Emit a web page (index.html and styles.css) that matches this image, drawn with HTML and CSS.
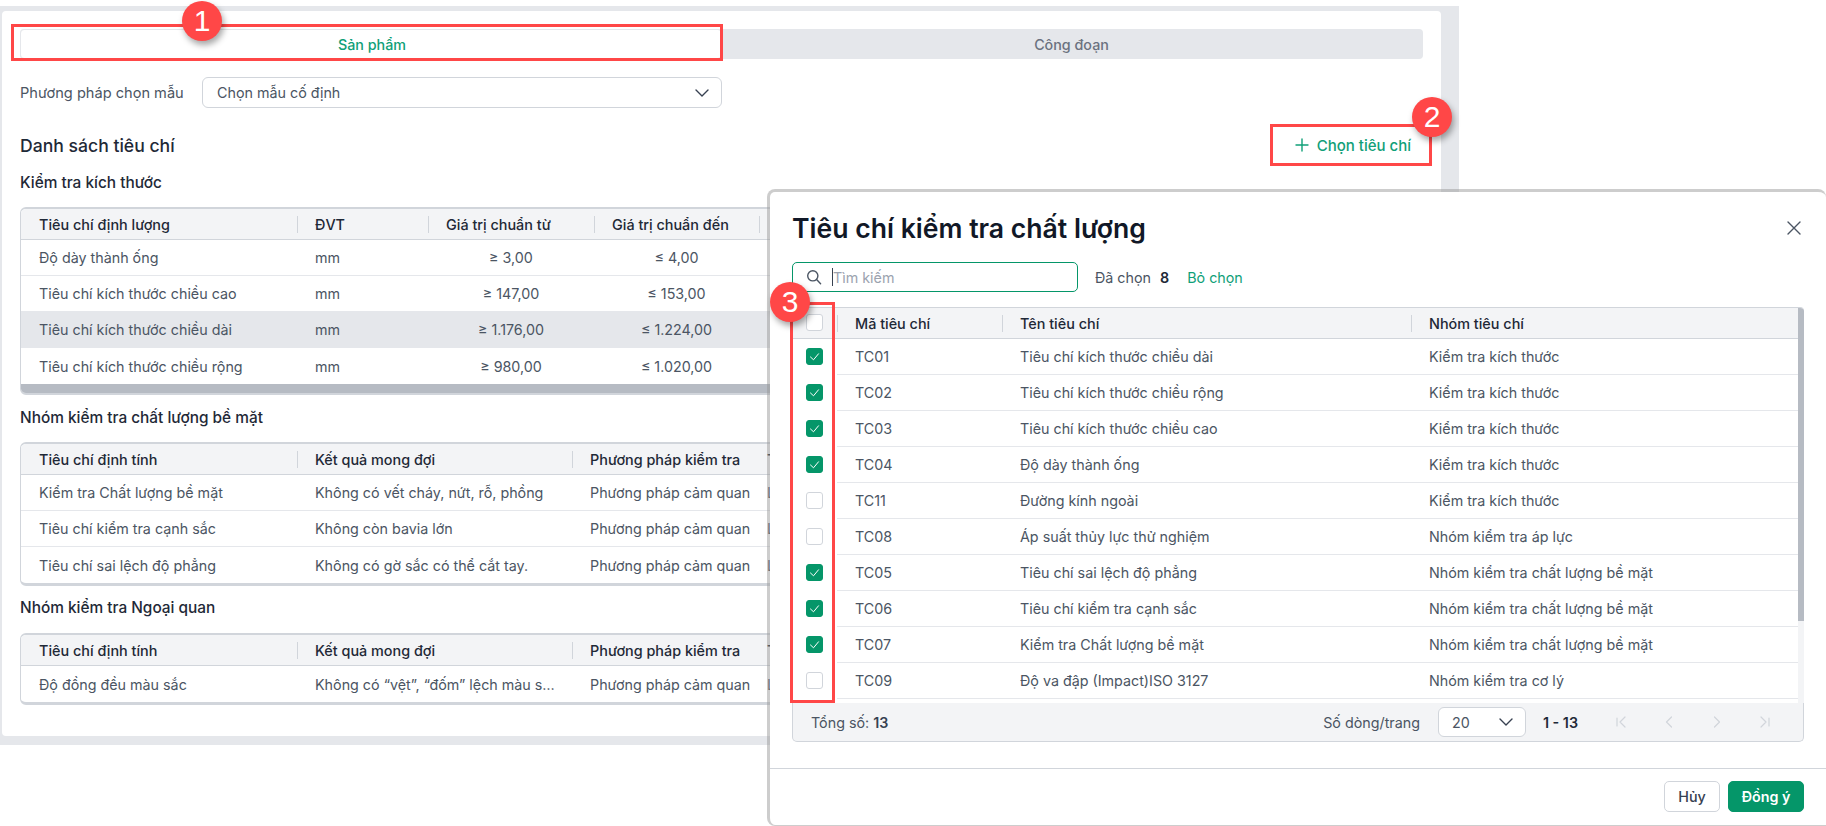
FILE: index.html
```html
<!DOCTYPE html>
<html lang="vi">
<head>
<meta charset="utf-8">
<title>Tiêu chí kiểm tra chất lượng</title>
<link rel="stylesheet" href="styles.css">
</head>
<body>
<svg class="defs" width="0" height="0" aria-hidden="true">
  <symbol id="chev" viewBox="0 0 16 16"><path d="M2 5l6 6 6-6" fill="none" stroke="currentColor" stroke-width="1.4" stroke-linecap="round" stroke-linejoin="round"/></symbol>
  <symbol id="tick" viewBox="0 0 17 17"><path d="M4.5 9l3 2.8 5-6" fill="none" stroke="#fff" stroke-width="1" stroke-linecap="round" stroke-linejoin="round"/></symbol>
</svg>
<main class="frame">
  <div class="card">
    <div class="tabs">
      <div class="tab tab-active">Sản phẩm</div>
      <div class="tab">Công đoạn</div>
    </div>
    <div class="method">
      <span class="method-label">Phương pháp chọn mẫu</span>
      <div class="select method-select">
        <span>Chọn mẫu cố định</span>
        <svg class="chev"><use href="#chev"/></svg>
      </div>
    </div>
    <div class="list-head">
      <h2 class="list-title">Danh sách tiêu chí</h2>
      <div class="add-btn">
        <svg class="plus" viewBox="0 0 14 14"><path d="M7 1v12M1 7h12" fill="none" stroke="currentColor" stroke-width="1.4" stroke-linecap="round"/></svg>
        <span>Chọn tiêu chí</span>
      </div>
    </div>

    <h3 class="group first">Kiểm tra kích thước</h3>
    <div class="tbl-wrap">
      <table class="tbl">
        <thead><tr><th class="c-a">Tiêu chí định lượng</th><th class="c-unit">ĐVT</th><th class="c-from">Giá trị chuẩn từ</th><th class="c-to">Giá trị chuẩn đến</th><th class="c-rest"></th></tr></thead>
        <tbody>
          <tr><td>Độ dày thành ống</td><td>mm</td><td class="num">≥ 3,00</td><td class="num">≤ 4,00</td><td></td></tr>
          <tr><td>Tiêu chí kích thước chiều cao</td><td>mm</td><td class="num">≥ 147,00</td><td class="num">≤ 153,00</td><td></td></tr>
          <tr class="hl"><td>Tiêu chí kích thước chiều dài</td><td>mm</td><td class="num">≥ 1.176,00</td><td class="num">≤ 1.224,00</td><td></td></tr>
          <tr><td>Tiêu chí kích thước chiều rộng</td><td>mm</td><td class="num">≥ 980,00</td><td class="num">≤ 1.020,00</td><td></td></tr>
        </tbody>
      </table>
      <div class="hbar"></div>
    </div>

    <h3 class="group">Nhóm kiểm tra chất lượng bề mặt</h3>
    <div class="tbl-wrap thick">
      <table class="tbl tbl-quality">
        <thead><tr><th class="c-a">Tiêu chí định tính</th><th class="c-b">Kết quả mong đợi</th><th class="c-c">Phương pháp kiểm tra</th><th class="c-rest nodiv">Tần suất</th></tr></thead>
        <tbody>
          <tr><td>Kiểm tra Chất lượng bề mặt</td><td>Không có vết cháy, nứt, rỗ, phồng</td><td>Phương pháp cảm quan</td><td>Lần/ca</td></tr>
          <tr><td>Tiêu chí kiểm tra cạnh sắc</td><td>Không còn bavia lớn</td><td>Phương pháp cảm quan</td><td>Lần/ca</td></tr>
          <tr><td>Tiêu chí sai lệch độ phẳng</td><td>Không có gờ sắc có thể cắt tay.</td><td>Phương pháp cảm quan</td><td>Lần/ca</td></tr>
        </tbody>
      </table>
    </div>

    <h3 class="group third">Nhóm kiểm tra Ngoại quan</h3>
    <div class="tbl-wrap thick">
      <table class="tbl tbl-quality">
        <thead><tr><th class="c-a">Tiêu chí định tính</th><th class="c-b">Kết quả mong đợi</th><th class="c-c">Phương pháp kiểm tra</th><th class="c-rest nodiv">Tần suất</th></tr></thead>
        <tbody>
          <tr><td>Độ đồng đều màu sắc</td><td>Không có “vệt”, “đốm” lệch màu sắc</td><td>Phương pháp cảm quan</td><td>Lần/ca</td></tr>
        </tbody>
      </table>
    </div>
  </div>
</main>

<section class="modal">
  <header class="modal-head">
    <h1 class="modal-title">Tiêu chí kiểm tra chất lượng</h1>
    <svg class="close" viewBox="0 0 14 14"><path d="M1 1l12 12M13 1L1 13" fill="none" stroke="#4b5563" stroke-width="1.4" stroke-linecap="round"/></svg>
  </header>
  <div class="modal-tools">
    <div class="search">
      <svg class="search-ico" viewBox="0 0 16 16"><circle cx="6.8" cy="6.8" r="5.1" fill="none" stroke="#4b5563" stroke-width="1.4"/><path d="M10.6 10.6l4 4.2" fill="none" stroke="#4b5563" stroke-width="1.4" stroke-linecap="round"/></svg>
      <span class="caret"></span>
      <span class="placeholder">Tìm kiếm</span>
    </div>
    <span class="picked">Đã chọn <b>8</b></span>
    <span class="unpick">Bỏ chọn</span>
  </div>
  <div class="dlg-table">
    <div class="dlg-scroll">
      <table class="tbl dlg">
        <thead><tr><th class="d-check"><span class="cb"></span></th><th class="d-code">Mã tiêu chí</th><th class="d-name">Tên tiêu chí</th><th class="d-group">Nhóm tiêu chí</th></tr></thead>
        <tbody>
          <tr><td class="d-check"><span class="cb on"><svg><use href="#tick"/></svg></span></td><td>TC01</td><td>Tiêu chí kích thước chiều dài</td><td>Kiểm tra kích thước</td></tr>
          <tr><td class="d-check"><span class="cb on"><svg><use href="#tick"/></svg></span></td><td>TC02</td><td>Tiêu chí kích thước chiều rộng</td><td>Kiểm tra kích thước</td></tr>
          <tr><td class="d-check"><span class="cb on"><svg><use href="#tick"/></svg></span></td><td>TC03</td><td>Tiêu chí kích thước chiều cao</td><td>Kiểm tra kích thước</td></tr>
          <tr><td class="d-check"><span class="cb on"><svg><use href="#tick"/></svg></span></td><td>TC04</td><td>Độ dày thành ống</td><td>Kiểm tra kích thước</td></tr>
          <tr><td class="d-check"><span class="cb"></span></td><td>TC11</td><td>Đường kính ngoài</td><td>Kiểm tra kích thước</td></tr>
          <tr><td class="d-check"><span class="cb"></span></td><td>TC08</td><td>Áp suất thủy lực thử nghiệm</td><td>Nhóm kiểm tra áp lực</td></tr>
          <tr><td class="d-check"><span class="cb on"><svg><use href="#tick"/></svg></span></td><td>TC05</td><td>Tiêu chí sai lệch độ phẳng</td><td>Nhóm kiểm tra chất lượng bề mặt</td></tr>
          <tr><td class="d-check"><span class="cb on"><svg><use href="#tick"/></svg></span></td><td>TC06</td><td>Tiêu chí kiểm tra cạnh sắc</td><td>Nhóm kiểm tra chất lượng bề mặt</td></tr>
          <tr><td class="d-check"><span class="cb on"><svg><use href="#tick"/></svg></span></td><td>TC07</td><td>Kiểm tra Chất lượng bề mặt</td><td>Nhóm kiểm tra chất lượng bề mặt</td></tr>
          <tr><td class="d-check"><span class="cb"></span></td><td>TC09</td><td>Độ va đập (Impact)ISO 3127</td><td>Nhóm kiểm tra cơ lý</td></tr>
        </tbody>
      </table>
    </div>
    <div class="vbar"><div class="vthumb"></div></div>
  </div>
  <div class="pager">
    <span class="total">Tổng số: <b>13</b></span>
    <span class="per-page">Số dòng/trang</span>
    <div class="select page-select"><span>20</span><svg class="chev"><use href="#chev"/></svg></div>
    <b class="range">1 - 13</b>
    <div class="nav">
      <svg viewBox="0 0 14 14"><path d="M3 3v8M11 2L6 7l5 5" fill="none" stroke="currentColor" stroke-width="1.2" stroke-linecap="round" stroke-linejoin="round"/></svg>
      <svg viewBox="0 0 14 14"><path d="M9.5 2L4.5 7l5 5" fill="none" stroke="currentColor" stroke-width="1.2" stroke-linecap="round" stroke-linejoin="round"/></svg>
      <svg viewBox="0 0 14 14"><path d="M4.5 2l5 5-5 5" fill="none" stroke="currentColor" stroke-width="1.2" stroke-linecap="round" stroke-linejoin="round"/></svg>
      <svg viewBox="0 0 14 14"><path d="M11 3v8M3 2l5 5-5 5" fill="none" stroke="currentColor" stroke-width="1.2" stroke-linecap="round" stroke-linejoin="round"/></svg>
    </div>
  </div>
  <footer class="modal-foot">
    <button class="btn">Hủy</button>
    <button class="btn btn-primary">Đồng ý</button>
  </footer>
</section>

<div class="mark mark-1"></div>
<div class="mark mark-2"></div>
<div class="mark mark-3"></div>
<div class="badge badge-1">1</div>
<div class="badge badge-2">2</div>
<div class="badge badge-3">3</div>
</body>
</html>
```
FILE: styles.css
```css
* { box-sizing: border-box; }
html, body { height: 100%; }
body {
  margin: 0;
  background: #fff;
  overflow: hidden;
  font-family: Inter, "Noto Sans", sans-serif;
  font-size: 14.3px;
  color: #4b5563;
}
.defs { position: absolute; }
h1, h2, h3 { margin: 0; }

.frame {
  width: 1459px;
  margin-top: 6px;
  padding: 5px 18px 9px 2px;
  background: #e5e7eb;
}
.card {
  background: #fff;
  border-radius: 4px;
  padding: 18px 18px 31px 18px;
}

.tabs {
  display: flex;
  height: 30px;
  background: #e5e7eb;
  border-radius: 4px;
}
.tab {
  flex: 1;
  display: flex;
  align-items: center;
  justify-content: center;
  padding-right: 2px;
  font-size: 14.3px;
  font-weight: 500;
  color: #6b7280;
}
.tab-active {
  flex: 0 0 702px;
  padding: 0 0 0 2px;
  background: #fff;
  border: 1px solid #e5e7eb;
  border-radius: 4px;
  color: #10a078;
}

.method {
  display: flex;
  align-items: center;
  margin-top: 18px;
}
.method-label { width: 182px; font-size: 14.6px; color: #4b5563; }
.select {
  display: flex;
  align-items: center;
  justify-content: space-between;
  background: #fff;
  border: 1px solid #d1d5db;
  border-radius: 6px;
}
.method-select {
  width: 520px;
  height: 31px;
  padding: 0 11px 0 14px;
  color: #4b5563;
}
.chev { width: 16px; height: 16px; color: #374151; }

.list-head {
  display: flex;
  align-items: center;
  justify-content: space-between;
  height: 24px;
  margin-top: 25px;
}
.list-title { font-size: 17.6px; font-weight: 500; color: #1f2937; }
.add-btn {
  display: flex;
  align-items: center;
  gap: 8px;
  margin-right: 12px;
  color: #10a078;
  font-weight: 500;
  font-size: 15px;
}
.plus { width: 14px; height: 14px; }

.group {
  font-size: 15.4px;
  font-weight: 500;
  line-height: 20px;
  color: #1f2937;
  margin-top: 13px;
}
.group.first { margin-top: 16px; }
.group.third { margin-top: 12px; }

.tbl-wrap {
  width: 1404px;
  margin-top: 14px;
  overflow: hidden;
  border: 1px solid #d1d5db;
  border-top-width: 2px;
  border-bottom-width: 2px;
  border-radius: 6px;
}
.tbl-wrap.thick { border-bottom-width: 3px; }
.group.third + .tbl-wrap { margin-top: 15px; }

.tbl {
  width: 100%;
  border-collapse: separate;
  border-spacing: 0;
  table-layout: fixed;
}
.tbl th {
  position: relative;
  height: 31px;
  padding: 0 18px;
  text-align: left;
  font-weight: 500;
  font-size: 14.4px;
  color: #1f2937;
  background: #f3f4f6;
  border-bottom: 1px solid #d1d5db;
  white-space: nowrap;
}
.tbl th + th::before {
  content: "";
  position: absolute;
  left: 0;
  top: 7px;
  width: 1px;
  height: 17px;
  background: #d1d5db;
}
.tbl th.nodiv::before { display: none; }
.tbl td {
  height: 36px;
  padding: 0 18px;
  border-bottom: 1px solid #e5e7eb;
  white-space: nowrap;
  overflow: hidden;
  text-overflow: ellipsis;
}
.tbl tbody tr:last-child td { border-bottom: 0; }
.tbl tr.hl td { background: #e5e7eb; border-bottom-color: #e5e7eb; }
.tbl td.num { text-align: center; }
.tbl-quality td:nth-child(2) { padding-right: 14px; }
.tbl-quality td:nth-child(3) { padding-right: 0; overflow: visible; }
.c-a { width: 276px; }
.c-unit { width: 131px; }
.c-from { width: 166px; }
.c-to { width: 165px; }
.c-b { width: 275px; }
.c-c { width: 177px; }
.hbar { height: 9px; background: #b6bbc3; }

/* Modal */
.modal {
  position: absolute;
  left: 767px;
  top: 189px;
  right: 0;
  bottom: 0;
  display: flex;
  flex-direction: column;
  background: #fff;
  background-clip: padding-box;
  border: 3px solid rgba(150, 150, 150, 0.47);
  border-right: 0;
  border-bottom-width: 1px;
  border-radius: 8px 8px 0 8px;
}
.modal-head {
  display: flex;
  align-items: center;
  justify-content: space-between;
  padding: 20px 25px 0 22px;
}
.modal-title {
  font-size: 26.6px;
  line-height: 32px;
  font-weight: 600;
  color: #111827;
}
.close { width: 14px; height: 14px; }
.modal-tools {
  display: flex;
  align-items: center;
  margin: 18px 22px 0;
}
.search {
  display: flex;
  align-items: center;
  width: 286px;
  height: 30px;
  padding-left: 13px;
  border: 1px solid #059669;
  border-radius: 5px;
}
.search-ico { width: 16px; height: 16px; }
.caret { width: 1px; height: 18px; margin-left: 10px; background: #374151; }
.placeholder { color: #9ca3af; }
.picked { margin-left: 17px; }
.picked b { margin-left: 5px; font-weight: 600; color: #1f2937; }
.unpick { margin-left: 18px; color: #10a078; }

.dlg-table {
  display: flex;
  height: 396px;
  margin: 15px 22px 0;
  border-left: 1px solid #d1d5db;
  border-top: 1px solid #d1d5db;
  border-top-right-radius: 4px;
  overflow: hidden;
}
.dlg-scroll { flex: 1; min-width: 0; }
.vbar { width: 6px; background: #f3f4f6; }
.vthumb { height: 313px; background: #b6bbc3; }
.dlg td { background: #fff; }
.dlg tbody tr:last-child td { border-bottom: 1px solid #e5e7eb; }
.dlg td.d-check, .dlg tbody tr:last-child td.d-check { border-bottom: 0; padding: 0 1px 0 0; }
.dlg th.d-check { padding: 0 1px 0 0; }
.d-check { width: 44px; }
.d-code { width: 165px; }
.d-name { width: 409px; }
.cb {
  display: block;
  width: 17px;
  height: 17px;
  margin: -2px auto 0;
  background: #fff;
  border: 1px solid #d1d5db;
  border-radius: 3px;
}
.cb.on { background: #059669; border-color: #059669; }
.cb svg { display: block; width: 17px; height: 17px; margin: -1px; }

.pager {
  display: flex;
  align-items: center;
  height: 39px;
  margin: 0 22px;
  padding-left: 18px;
  background: #f3f4f6;
  border: 1px solid #d1d5db;
  border-top: 0;
  border-radius: 0 0 5px 5px;
}
.total b { font-weight: 600; color: #374151; }
.per-page { margin-left: auto; }
.page-select {
  width: 88px;
  height: 30px;
  margin-left: 18px;
  padding: 0 11px 0 13px;
}
.range { margin-left: 17px; font-weight: 600; color: #1f2937; }
.nav {
  display: flex;
  gap: 34px;
  margin-left: 36px;
  margin-right: 31px;
  color: #d1d5db;
}
.nav svg { width: 14px; height: 14px; }

.modal-foot {
  display: flex;
  justify-content: flex-end;
  gap: 8px;
  flex: 1;
  margin-top: 26px;
  padding: 12px 22px 0;
  border-top: 1px solid #d1d5db;
}
.btn {
  height: 31px;
  width: 56px;
  padding: 0;
  background: #fff;
  border: 1px solid #d1d5db;
  border-radius: 5px;
  font: 500 14.3px Inter, "Noto Sans", sans-serif;
  color: #374151;
}
.btn-primary {
  width: 76px;
  background: #059669;
  border-color: #059669;
  color: #fff;
  font-weight: 600;
}

/* Annotations laid over the screenshot */
.mark {
  position: absolute;
  border: 3px solid #ff4747;
}
.mark-1 { left: 11px; top: 24px; width: 712px; height: 37px; }
.mark-2 { left: 1270px; top: 124px; width: 162px; height: 42px; }
.mark-3 { left: 790px; top: 302px; width: 45px; height: 401px; }
.badge {
  position: absolute;
  width: 40px;
  height: 40px;
  display: flex;
  align-items: center;
  justify-content: center;
  border-radius: 50%;
  background: #ff4747;
  box-shadow: 2px 4px 6px rgba(0, 0, 0, 0.35);
  color: #fff;
  font: 400 30px "Liberation Sans", Arial, sans-serif;
}
.badge-1 { left: 182px; top: 1px; }
.badge-2 { left: 1412px; top: 97px; }
.badge-3 { left: 770px; top: 282px; }
```
